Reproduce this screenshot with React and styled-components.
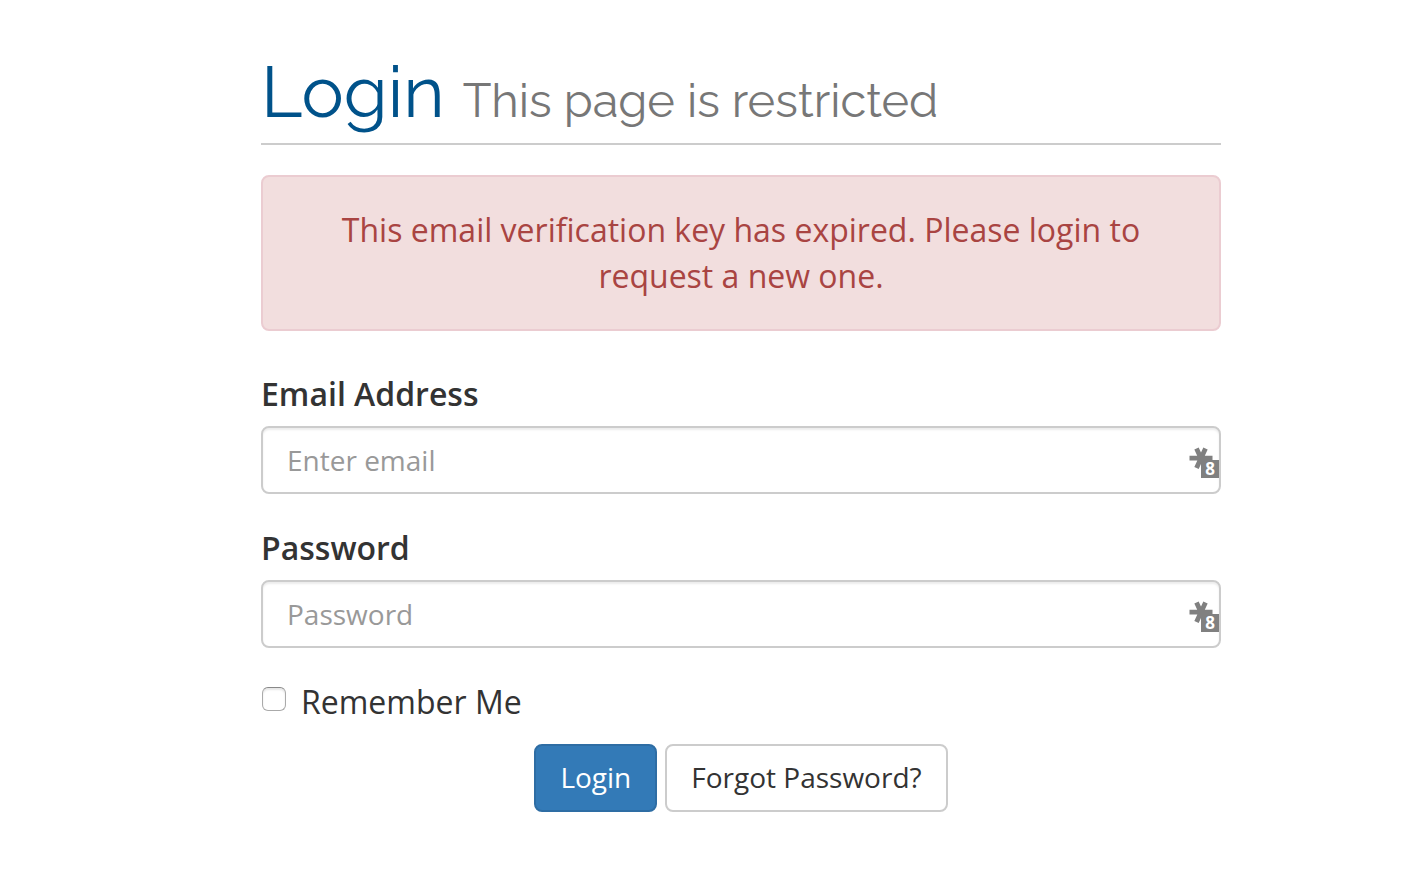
import React from 'react';
import styled, { createGlobalStyle } from 'styled-components';

const GlobalStyle = createGlobalStyle`
	* {
		box-sizing: border-box;
	}
	body {
		margin: 0;
		background-color: #fff;
		color: #333;
		font-family: 'Open Sans', sans-serif;
		font-size: 32px;
		line-height: 46px;
	}
`;

const Page = styled.div`
	padding: 48px 0 48px 60px;
`;

const Container = styled.main`
	width: 90%;
	max-width: 960px;
	margin: 0 auto;
`;

const PageHeader = styled.header`
	padding-bottom: 7px;
	border-bottom: 2px solid #ccc;
`;

const Title = styled.h1`
	margin: 0;
	color: #00528a;
	font-family: Raleway, Lato, sans-serif;
	font-size: 71px;
	font-weight: 400;
	line-height: 88px;
`;

const Subtitle = styled.small`
	color: #777;
	font-size: 47px;
	line-height: 1;
`;

const Alert = styled.div`
	margin: 30px 0 40px;
	padding: 30px;
	border: 2px solid #ebccd1;
	border-radius: 8px;
	background-color: #f2dede;
	color: #a94442;
	text-align: center;
`;

const Group = styled.div`
	margin-bottom: 31px;
`;

const Label = styled.label`
	display: block;
	margin-bottom: 9px;
	font-weight: 600;
`;

const Field = styled.div`
	position: relative;
`;

const Input = styled.input`
	display: block;
	width: 100%;
	height: 68px;
	padding: 12px 24px;
	border: 2px solid #ccc;
	border-radius: 8px;
	box-shadow: inset 0 2px 2px rgba(0, 0, 0, 0.075);
	color: #555;
	font: 28px/40px 'Open Sans', sans-serif;
	&::placeholder {
		color: #999;
		opacity: 1;
	}
`;

const KeyIcon = styled.svg`
	position: absolute;
	top: 20px;
	right: 2px;
	width: 32px;
	height: 32px;
	overflow: visible;
	pointer-events: none;
`;

const Remember = styled.label`
	display: flex;
	align-items: center;
	gap: 15px;
	padding-left: 1px;
`;

const Checkbox = styled.input`
	appearance: none;
	width: 24px;
	height: 24px;
	margin: 0 0 6px;
	border: 1px solid #aaa;
	border-top-color: #888;
	border-radius: 6px;
	background-color: #fff;
	box-shadow: inset 0 2px 2px rgba(0, 0, 0, 0.1);
	&:checked {
		background-color: #337ab7;
	}
`;

const Actions = styled.div`
	display: flex;
	justify-content: center;
	gap: 8px;
	margin-top: 19px;
`;

const Button = styled.button`
	height: 68px;
	padding: 0 24px 2px;
	border: 2px solid ${({ $primary }) => ($primary ? '#2e6da4' : '#ccc')};
	border-radius: 8px;
	background-color: ${({ $primary }) => ($primary ? '#337ab7' : '#fff')};
	color: ${({ $primary }) => ($primary ? '#fff' : '#333')};
	font: 28px/40px 'Open Sans', sans-serif;
	cursor: pointer;
`;

const PasswordManagerIcon = () => (
	<KeyIcon viewBox='0 0 32 32' aria-hidden='true'>
		<path
			d='M2.5 12.2h23M9.5 2.5l9 19.4M18.5 2.5l-9 19.4'
			stroke='#808080'
			strokeWidth='4.8'
		/>
		<path d='M14 14h18v18H14z' fill='#808080' />
		<text
			x='23'
			y='29'
			fill='#fff'
			fontSize='17'
			fontWeight='700'
			textAnchor='middle'
		>
			8
		</text>
	</KeyIcon>
);

const LoginField = ({ id, type, label, placeholder }) => (
	<Group>
		<Label htmlFor={id}>{label}</Label>
		<Field>
			<Input id={id} name={id} type={type} placeholder={placeholder} />
			<PasswordManagerIcon />
		</Field>
	</Group>
);

const App = () => {
	return (
		<Page>
			<GlobalStyle />
			<Container>
				<PageHeader>
					<Title>
						Login <Subtitle>This page is restricted</Subtitle>
					</Title>
				</PageHeader>
				<Alert role='alert'>
					This email verification key has expired. Please login to request a
					new one.
				</Alert>
				<form onSubmit={(e) => e.preventDefault()}>
					<LoginField
						id='email'
						type='email'
						label='Email Address'
						placeholder='Enter email'
					/>
					<LoginField
						id='password'
						type='password'
						label='Password'
						placeholder='Password'
					/>
					<Remember>
						<Checkbox type='checkbox' name='remember' />
						Remember Me
					</Remember>
					<Actions>
						<Button type='submit' $primary>
							Login
						</Button>
						<Button type='button'>Forgot Password?</Button>
					</Actions>
				</form>
			</Container>
		</Page>
	);
};

export default App;
